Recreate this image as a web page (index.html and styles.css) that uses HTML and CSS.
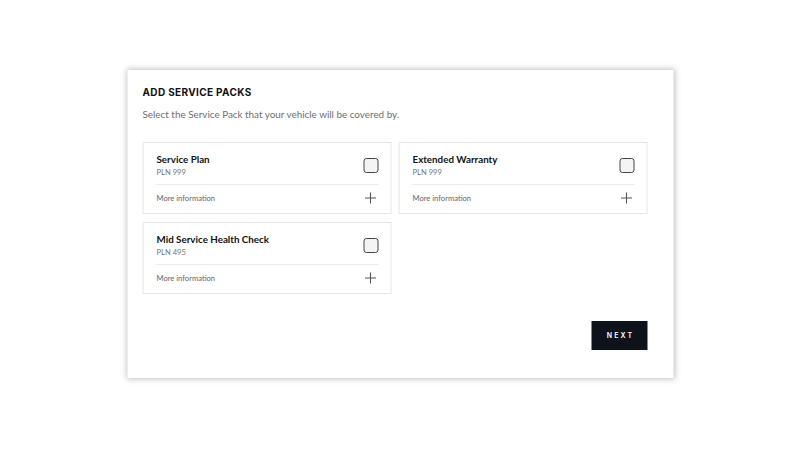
FILE: index.html
```html
<!DOCTYPE html>
<html>
<head>
<meta charset="utf-8">
<link rel="stylesheet" href="styles.css">
</head>
<body>
<div class="page">
  <div class="panel">
    <h1 class="title">ADD SERVICE PACKS</h1>
    <p class="subtitle">Select the Service Pack that your vehicle will be covered by.</p>
    <div class="packs">
      <div class="pack">
        <div class="pack-head">
          <div>
            <div class="pack-name">Service Plan</div>
            <div class="pack-price">PLN 999</div>
          </div>
          <span class="check"></span>
        </div>
        <div class="pack-more">
          <span>More information</span>
          <svg class="plus" viewBox="0 0 12 12" width="12" height="12"><path d="M6 0.5V11.5M0.5 6H11.5" stroke="#555" stroke-width="1.1" fill="none"/></svg>
        </div>
      </div>
      <div class="pack">
        <div class="pack-head">
          <div>
            <div class="pack-name">Extended Warranty</div>
            <div class="pack-price">PLN 999</div>
          </div>
          <span class="check"></span>
        </div>
        <div class="pack-more">
          <span>More information</span>
          <svg class="plus" viewBox="0 0 12 12" width="12" height="12"><path d="M6 0.5V11.5M0.5 6H11.5" stroke="#555" stroke-width="1.1" fill="none"/></svg>
        </div>
      </div>
      <div class="pack">
        <div class="pack-head">
          <div>
            <div class="pack-name">Mid Service Health Check</div>
            <div class="pack-price">PLN 495</div>
          </div>
          <span class="check"></span>
        </div>
        <div class="pack-more">
          <span>More information</span>
          <svg class="plus" viewBox="0 0 12 12" width="12" height="12"><path d="M6 0.5V11.5M0.5 6H11.5" stroke="#555" stroke-width="1.1" fill="none"/></svg>
        </div>
      </div>
    </div>
    <div class="actions">
      <button class="next">NEXT</button>
    </div>
  </div>
</div>
</body>
</html>
```
FILE: styles.css
```css
html, body {
  margin: 0;
  padding: 0;
  background: #ffffff;
}
body {
  font-family: "Lato", "Noto Sans", sans-serif;
  color: #111;
}
.page {
  width: 800px;
  height: 450px;
  display: flex;
  align-items: center;
  justify-content: center;
}
.panel {
  box-sizing: border-box;
  width: 546px;
  height: 308px;
  background: #fff;
  box-shadow: 0 0 6px 1px rgba(0, 0, 0, 0.25);
  padding: 16px 26px 0 15px;
  display: flex;
  flex-direction: column;
  transform: translate(0.5px, -1px);
}
.title {
  margin: 0;
  font-family: "Inter", "Noto Sans", sans-serif;
  font-size: 10px;
  font-weight: 700;
  letter-spacing: 0.35px;
  line-height: 12px;
}
.subtitle {
  margin: 10px 0 0;
  font-size: 9.9px;
  color: #6e6e6e;
  line-height: 12px;
}
.packs {
  margin-top: 22px;
  display: grid;
  grid-template-columns: 249px 249px;
  column-gap: 7px;
  row-gap: 8px;
}
.pack {
  box-sizing: border-box;
  height: 72px;
  border: 1px solid #e6e6e6;
  padding: 0 12px 0 13px;
  display: flex;
  flex-direction: column;
}
.pack-head {
  display: flex;
  justify-content: space-between;
  align-items: flex-start;
  height: 42px;
  box-sizing: border-box;
  padding-top: 10px;
  border-bottom: 1px solid #ebebeb;
}
.pack-name {
  font-size: 9.8px;
  font-weight: 700;
  line-height: 12px;
  color: #111;
}
.pack-price {
  margin-top: 2px;
  font-size: 7.6px;
  color: #777;
  line-height: 10px;
}
.check {
  box-sizing: border-box;
  width: 15px;
  height: 15px;
  margin-top: 5px;
  border: 1.3px solid #444;
  border-radius: 3px;
  background: #f4f4f4;
}
.pack-more {
  flex: 1;
  display: flex;
  justify-content: space-between;
  align-items: center;
  font-size: 7.6px;
  color: #666;
  padding-bottom: 2px;
}
.plus {
  margin-right: 2px;
}
.actions {
  display: flex;
  justify-content: flex-end;
  margin-top: 27px;
}
.next {
  width: 56px;
  height: 29px;
  background: #0e121a;
  color: #fff;
  border: none;
  font-family: "Inter", "Noto Sans", sans-serif;
  font-size: 7px;
  font-weight: 600;
  letter-spacing: 2.2px;
  padding: 0 0 0 2px;
}
```
